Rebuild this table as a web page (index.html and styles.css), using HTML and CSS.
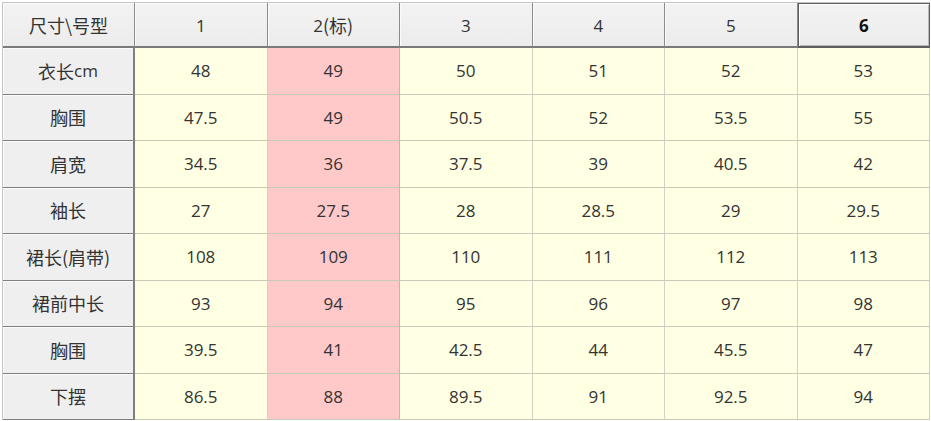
FILE: index.html
```html
<!DOCTYPE html>
<html lang="zh">
<head>
<meta charset="utf-8">
<title>尺寸表</title>
<link rel="stylesheet" href="styles.css">
</head>
<body>
<div class="wrap">
  <div class="grid">
    <div class="hd corner"><span class="zh">尺寸\号型</span></div>
    <div class="hd">1</div>
    <div class="hd">2<span class="zh">(标)</span></div>
    <div class="hd">3</div>
    <div class="hd">4</div>
    <div class="hd">5</div>
    <div class="hd sel">6</div>

    <div class="rh"><span class="zh">衣长</span>cm</div>
    <div class="c">48</div><div class="c std">49</div><div class="c">50</div><div class="c">51</div><div class="c">52</div><div class="c">53</div>

    <div class="rh"><span class="zh">胸围</span></div>
    <div class="c">47.5</div><div class="c std">49</div><div class="c">50.5</div><div class="c">52</div><div class="c">53.5</div><div class="c">55</div>

    <div class="rh"><span class="zh">肩宽</span></div>
    <div class="c">34.5</div><div class="c std">36</div><div class="c">37.5</div><div class="c">39</div><div class="c">40.5</div><div class="c">42</div>

    <div class="rh"><span class="zh">袖长</span></div>
    <div class="c">27</div><div class="c std">27.5</div><div class="c">28</div><div class="c">28.5</div><div class="c">29</div><div class="c">29.5</div>

    <div class="rh"><span class="zh">裙长(肩带)</span></div>
    <div class="c">108</div><div class="c std">109</div><div class="c">110</div><div class="c">111</div><div class="c">112</div><div class="c">113</div>

    <div class="rh"><span class="zh">裙前中长</span></div>
    <div class="c">93</div><div class="c std">94</div><div class="c">95</div><div class="c">96</div><div class="c">97</div><div class="c">98</div>

    <div class="rh"><span class="zh">胸围</span></div>
    <div class="c">39.5</div><div class="c std">41</div><div class="c">42.5</div><div class="c">44</div><div class="c">45.5</div><div class="c">47</div>

    <div class="rh"><span class="zh">下摆</span></div>
    <div class="c">86.5</div><div class="c std">88</div><div class="c">89.5</div><div class="c">91</div><div class="c">92.5</div><div class="c">94</div>
  </div>
</div>
</body>
</html>
```

FILE: styles.css
```css
html, body {
  margin: 0;
  padding: 0;
  background: #ffffff;
}

.wrap {
  padding: 2px 0 0 2px;
}

.grid {
  display: grid;
  grid-template-columns: 132px repeat(6, 1fr);
  grid-template-rows: 45px repeat(8, 1fr);
  width: 927px;
  height: 417px;
  border-left: 1px solid #c4c4c4;
  border-top: 1px solid #c4c4c4;
  font-family: "Open Sans", "Noto Sans CJK SC", sans-serif;
  font-size: 17px;
  color: #333333;
}

.grid > div {
  display: flex;
  align-items: center;
  justify-content: center;
  box-sizing: border-box;
  white-space: nowrap;
}

.zh {
  font-family: "Noto Sans CJK SC", sans-serif;
  font-size: 18px;
}

.hd {
  background: linear-gradient(#f3f3f3, #ececec);
  border-right: 1px solid #8c8c8c;
  border-bottom: 2px solid #7a7a7a;
  box-shadow: inset 1px 1px 0 #fbfbfb;
  padding-top: 1px;
}

.hd.sel {
  font-weight: 700;
  color: #111111;
  border: 1px solid #5e5e5e;
  border-bottom: 2px solid #5e5e5e;
  box-shadow: inset 1px 1px 0 #ffffff, inset -1px -1px 0 #b8b8b8;
}

.rh {
  background: #efefef;
  border-right: 2px solid #7f7f7f;
  border-bottom: 1px solid #7f7f7f;
  box-shadow: inset 1px 1px 0 #fbfbfb;
}

.c {
  background: #ffffe4;
  border-right: 1px solid #d2d2c4;
  border-bottom: 1px solid #c9c9b8;
}

.c.std {
  background: #ffc8c9;
  border-right-color: #c8b4ae;
}
```
